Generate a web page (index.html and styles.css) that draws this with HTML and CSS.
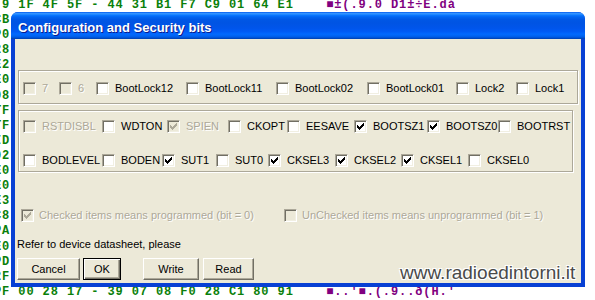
FILE: index.html
```html
<!DOCTYPE html>
<html>
    <head>
        <meta charset="utf-8">
        <title>Configuration and Security bits</title>
        <link rel="stylesheet" href="styles.css">
    </head>
    <body>
        <svg class="defs" width="0" height="0">
            <symbol id="tick" viewBox="0 0 9 9">
                <polygon points="7,1 8,1 8,4 7,4 7,5 6,5 6,6 5,6 5,7 4,7 4,8 3,8 3,7 2,7 2,6 1,6 1,3 2,3 2,4 3,4 3,5 4,5 4,4 5,4 5,3 6,3 6,2 7,2"/>
            </symbol>
        </svg>

        <!-- hex editor behind the dialog -->
        <pre class="hex"> 9 1F 4F 5F - 44 31 B1 F7 C9 01 64 E1    <span class="asc">■±(.9.0 D1±÷E.dá</span>
CB
P0
28
E2
E0
08
TF
TF
ID
02
E0
E0
E3
C8
PA
E0
PD
2F
PF 00 28 17 - 39 07 08 F0 28 C1 80 91    <span class="asc">■..'■.(.9..ð(H.'</span></pre>

        <div class="window">
            <div class="titlebar">Configuration and Security bits</div>
            <div class="client">
                <div class="group group-lock">
                    <div class="bits bits-lock">
                        <span class="bit off"><span class="cb"></span>7</span>
                        <span class="bit off"><span class="cb"></span>6</span>
                        <span class="bit"><span class="cb"></span>BootLock12</span>
                        <span class="bit"><span class="cb"></span>BootLock11</span>
                        <span class="bit"><span class="cb"></span>BootLock02</span>
                        <span class="bit"><span class="cb"></span>BootLock01</span>
                        <span class="bit"><span class="cb"></span>Lock2</span>
                        <span class="bit"><span class="cb"></span>Lock1</span>
                    </div>
                </div>
                <div class="group group-fuse">
                    <div class="bits bits-high">
                        <span class="bit off"><span class="cb"></span>RSTDISBL</span>
                        <span class="bit"><span class="cb"></span>WDTON</span>
                        <span class="bit off"><span class="cb"><svg class="tick"><use href="#tick"/></svg></span>SPIEN</span>
                        <span class="bit"><span class="cb"></span>CKOPT</span>
                        <span class="bit"><span class="cb"></span>EESAVE</span>
                        <span class="bit"><span class="cb"><svg class="tick"><use href="#tick"/></svg></span>BOOTSZ1</span>
                        <span class="bit"><span class="cb"><svg class="tick"><use href="#tick"/></svg></span>BOOTSZ0</span>
                        <span class="bit"><span class="cb"></span>BOOTRST</span>
                    </div>
                    <div class="bits bits-low">
                        <span class="bit"><span class="cb"></span>BODLEVEL</span>
                        <span class="bit"><span class="cb"></span>BODEN</span>
                        <span class="bit"><span class="cb"><svg class="tick"><use href="#tick"/></svg></span>SUT1</span>
                        <span class="bit"><span class="cb"></span>SUT0</span>
                        <span class="bit"><span class="cb"><svg class="tick"><use href="#tick"/></svg></span>CKSEL3</span>
                        <span class="bit"><span class="cb"><svg class="tick"><use href="#tick"/></svg></span>CKSEL2</span>
                        <span class="bit"><span class="cb"><svg class="tick"><use href="#tick"/></svg></span>CKSEL1</span>
                        <span class="bit"><span class="cb"></span>CKSEL0</span>
                    </div>
                </div>
                <div class="legend">
                    <span class="bit off"><span class="cb"><svg class="tick"><use href="#tick"/></svg></span>Checked items means programmed (bit = 0)</span>
                    <span class="bit off"><span class="cb"></span>UnChecked items means unprogrammed (bit = 1)</span>
                </div>
                <p class="note">Refer to device datasheet, please</p>
                <div class="buttons">
                    <button class="btn btn-cancel">Cancel</button>
                    <button class="btn btn-ok">OK</button>
                    <button class="btn btn-write">Write</button>
                    <button class="btn btn-read">Read</button>
                </div>
            </div>
        </div>

        <div class="watermark">www.radioedintorni.it</div>
    </body>
</html>
```
FILE: styles.css
```css
body{
    margin:0;
    width:595px;
    height:300px;
    position:relative;
    overflow:hidden;
    background-color:#fff;
    font-family:"Liberation Sans", Arial, sans-serif;
}
.defs{
    position:absolute;
}
.hex{
    margin:-2px 0 0 -6px;
    font-family:"Liberation Mono", "DejaVu Sans Mono", monospace;
    font-weight:bold;
    font-size:12px;
    letter-spacing:0.9px;
    line-height:15.1px;
    color:#0a7f0a;
}
.asc{
    color:#800080;
}

/* dialog window */
.window{
    position:absolute;
    left:11px;
    top:12px;
    width:574px;
    height:275px;
    background-color:#0840d4;
    border-radius:7px 7px 0 0;
}
.titlebar{
    height:27px;
    padding:2px 0 0 7px;
    box-sizing:border-box;
    line-height:27px;
    font-size:13px;
    font-weight:bold;
    color:#fff;
    text-shadow:1px 1px #0c1c8c;
    border-radius:7px 7px 0 0;
    background:linear-gradient(#0058ee 0%, #3593ff 5%, #288eff 8%, #127dff 11%, #036ffc 14%, #0262ee 20%, #0057e5 28%, #0054e3 40%, #0055eb 60%, #005bf5 72%, #026afe 82%, #0062ef 90%, #0052d6 95%, #0040ab 100%);
}
.client{
    margin:0 4px;
    height:244px;
    padding:31px 0 0 3px;
    box-sizing:border-box;
    background-color:#ece9d8;
    font-size:11px;
    line-height:13px;
}

/* etched group boxes */
.group{
    box-sizing:border-box;
    border:1px solid #aca899;
    box-shadow:inset 1px 1px #fff, 1px 1px #fff;
    padding-left:4px;
}
.group-lock{
    width:560px;
    height:34px;
    padding-top:11px;
}
.group-fuse{
    width:555px;
    height:62px;
    margin-top:6px;
    padding-top:9px;
}
.bits{
    display:grid;
}
.bits-lock{
    grid-template-columns:36px 37px 90px 90px 91px 89px 60px auto;
}
.bits-high{
    grid-template-columns:79px 65px 61px 59px 67px 73px 71px auto;
}
.bits-low{
    margin-top:21px;
    grid-template-columns:79px 60px 54px 52px 67px 66px 67px auto;
}

/* classic checkboxes */
.bit{
    display:flex;
    align-items:center;
    gap:6px;
    white-space:nowrap;
    height:13px;
    color:#000;
}
.cb{
    width:13px;
    height:13px;
    flex:none;
    box-sizing:border-box;
    display:flex;
    align-items:center;
    justify-content:center;
    border:1px solid;
    border-color:#aca899 #fff #fff #aca899;
    box-shadow:inset 1px 1px #716f64, inset -1px -1px #f1efe2;
    background-color:#fff;
    color:#000;
}
.tick{
    width:9px;
    height:9px;
    fill:currentColor;
}
.off{
    color:#aca899;
    text-shadow:1px 1px #fff;
}
.off .cb{
    background-color:#ece9d8;
    color:#aca899;
}

.legend{
    display:grid;
    grid-template-columns:263px auto;
    margin-top:37px;
    padding-left:3px;
}
.legend .bit{
    gap:5px;
}
.note{
    margin:16px 0 0 -1px;
    color:#000;
}
.buttons{
    display:flex;
    margin:7px 0 0 -1px;
}
.btn{
    height:22px;
    padding:0;
    font-family:inherit;
    font-size:11px;
    color:#000;
    background-color:#ece9d8;
    border:1px solid;
    border-color:#fff #716f64 #716f64 #fff;
    box-shadow:inset -1px -1px #aca899;
}
.btn-cancel{
    width:63px;
}
.btn-ok{
    width:38px;
    margin-left:3px;
    border-color:#000;
    box-shadow:inset 1px 1px #fff, inset -1px -1px #716f64, inset -2px -2px #aca899;
}
.btn-write{
    width:56px;
    margin-left:22px;
}
.btn-read{
    width:51px;
    margin-left:4px;
}

.watermark{
    position:absolute;
    left:400px;
    top:262px;
    font-size:19px;
    line-height:22px;
    color:#4a4a4a;
    text-shadow:1px 1px #fff, -1px -1px #fff, 1px -1px #fff, -1px 1px #fff;
}
```
